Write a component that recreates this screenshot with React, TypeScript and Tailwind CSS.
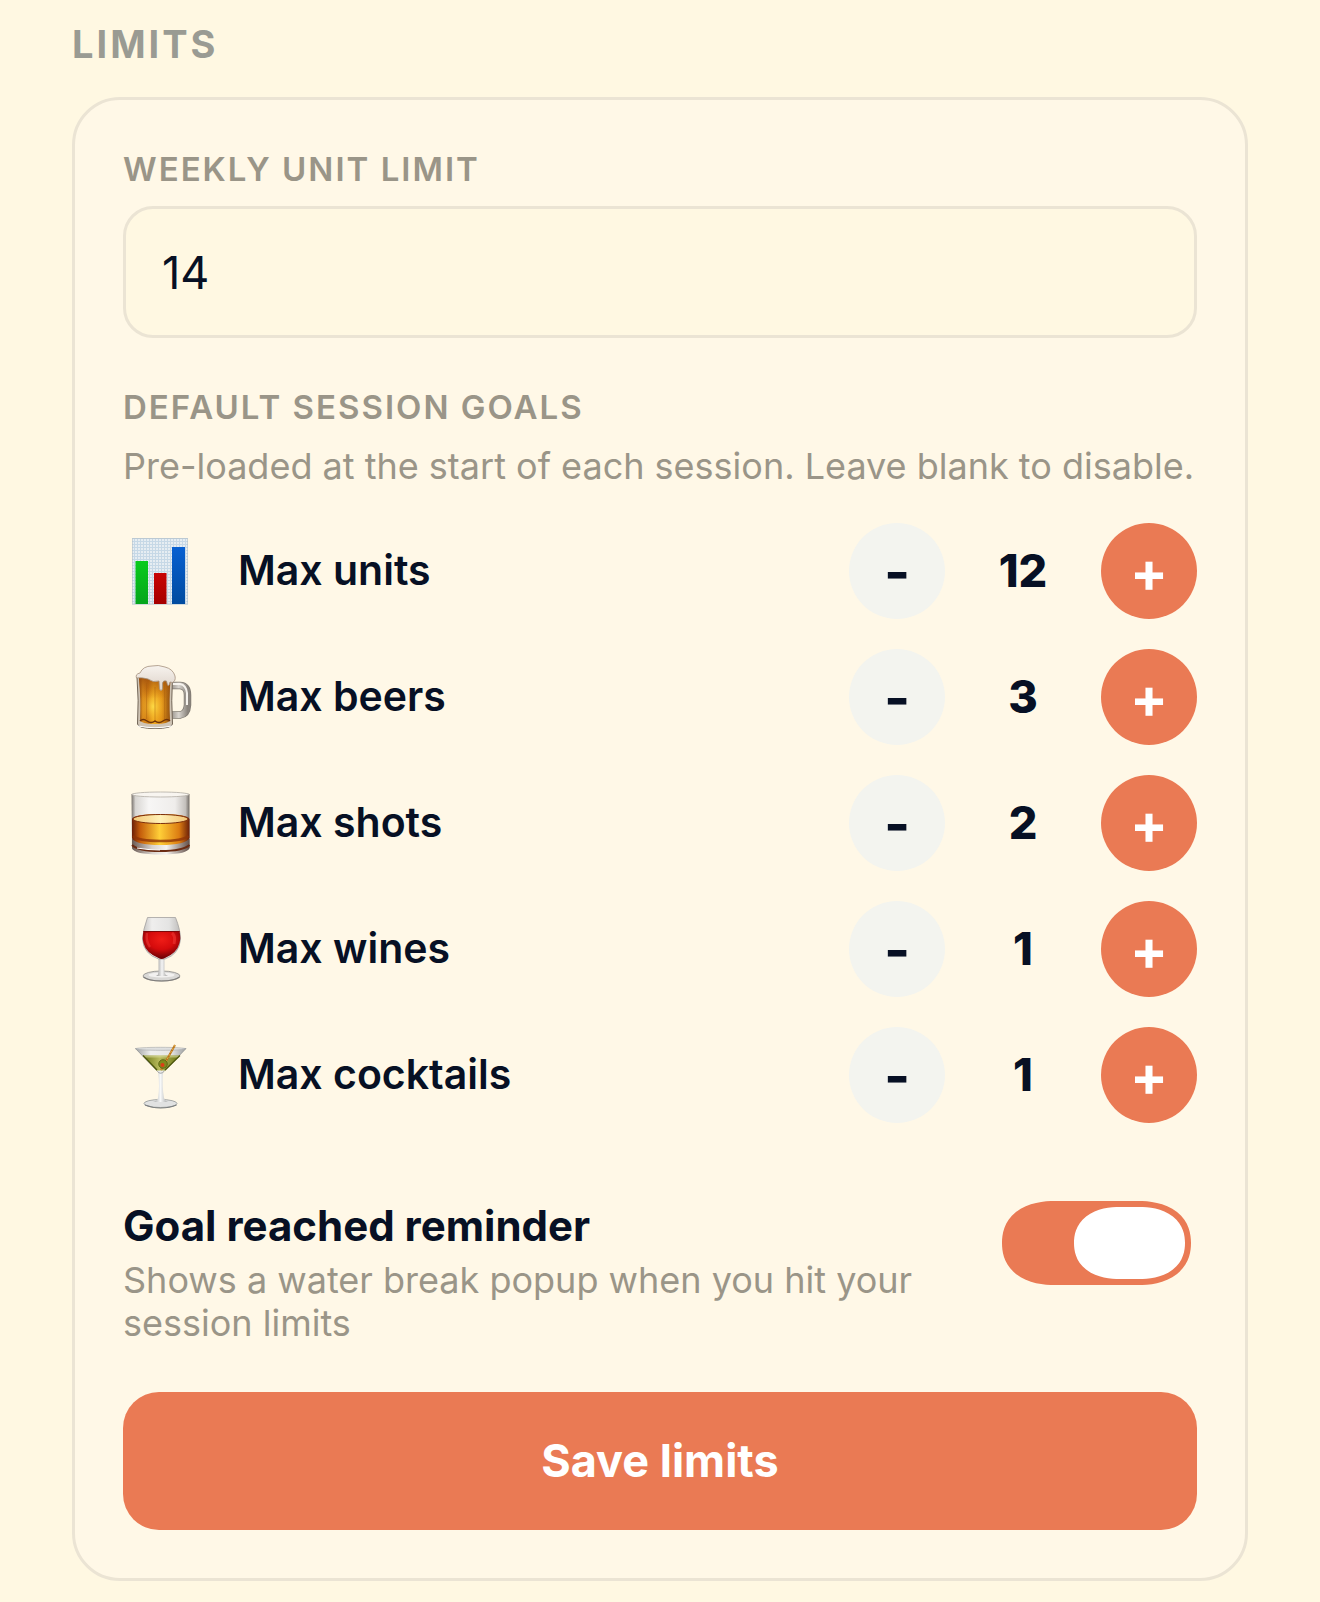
import { useState } from 'react'

const ChartIcon = () => (
  <svg viewBox="0 1 110 100" className="w-[110px] h-[100px]" aria-hidden="true">
    <defs>
      <pattern id="chart-grid" width="3" height="3" patternUnits="userSpaceOnUse">
        <rect width="3" height="3" fill="#e6edf2" />
        <path d="M0 .5H3M.5 0V3" stroke="#c6d8e6" strokeWidth="1" />
      </pattern>
      <linearGradient id="chart-green" x1="0" y1="0" x2="0" y2="1">
        <stop offset="0" stopColor="#08cb1c" />
        <stop offset="1" stopColor="#05a51c" />
      </linearGradient>
      <linearGradient id="chart-red" x1="0" y1="0" x2="0" y2="1">
        <stop offset="0" stopColor="#c80404" />
        <stop offset="1" stopColor="#a60000" />
      </linearGradient>
      <linearGradient id="chart-blue" x1="0" y1="0" x2="0" y2="1">
        <stop offset="0" stopColor="#0760d2" />
        <stop offset="1" stopColor="#004b9f" />
      </linearGradient>
    </defs>
    <rect x="22" y="18" width="56" height="66.500" fill="url(#chart-grid)" />
    <rect x="22.500" y="18.500" width="55" height="65.500" fill="none" stroke="#b4bfc6" strokeOpacity=".6" />
    <rect x="25.500" y="41" width="12.500" height="43" fill="url(#chart-green)" />
    <rect x="44" y="53" width="12.500" height="31" fill="url(#chart-red)" />
    <rect x="62" y="27" width="13" height="57" fill="url(#chart-blue)" />
  </svg>
)

const BeerIcon = () => (
  <svg viewBox="0 2 110 100" className="w-[110px] h-[100px]" aria-hidden="true">
    <defs>
      <linearGradient id="beer-body" x1="0" y1="0" x2="1" y2="0">
        <stop offset="0" stopColor="#8a4a12" />
        <stop offset=".12" stopColor="#d98a1c" />
        <stop offset=".28" stopColor="#c8720f" />
        <stop offset=".45" stopColor="#f0a91f" />
        <stop offset=".72" stopColor="#e08f16" />
        <stop offset="1" stopColor="#92500f" />
      </linearGradient>
      <radialGradient id="beer-glow" cx=".45" cy=".62" r=".45">
        <stop offset="0" stopColor="#ffe04a" stopOpacity=".9" />
        <stop offset="1" stopColor="#f2a51c" stopOpacity="0" />
      </radialGradient>
      <linearGradient id="beer-shade" x1="0" y1="0" x2="0" y2="1">
        <stop offset="0" stopColor="#9a4b0c" stopOpacity=".75" />
        <stop offset=".45" stopColor="#b8650f" stopOpacity="0" />
      </linearGradient>
      <linearGradient id="beer-foam" x1="0" y1="0" x2="0" y2="1">
        <stop offset="0" stopColor="#f7f3ee" />
        <stop offset="1" stopColor="#ddd2c8" />
      </linearGradient>
      <linearGradient id="beer-handle" x1="0" y1="0" x2="1" y2="0">
        <stop offset="0" stopColor="#8f8981" />
        <stop offset=".5" stopColor="#d8d4ce" />
        <stop offset="1" stopColor="#8b857e" />
      </linearGradient>
    </defs>
    <path d="M60 40.500H70Q77.500 41 77.500 50V60Q77 69 70 70H60" fill="none" stroke="#7f7971" strokeWidth="7.500" />
    <path d="M60 40.500H70Q77.500 41 77.500 50V60Q77 69 70 70H60" fill="none" stroke="url(#beer-handle)" strokeWidth="6" />
    <path d="M62 39H70Q76 40 77 48V60" fill="none" stroke="#f6f3ee" strokeWidth="2" />
    <path d="M27 32Q29 56 27.500 79Q28 83.500 45 83.500Q62 83.500 62.500 79Q61 56 62.500 32Z" fill="#cfc4b5" stroke="#716557" strokeWidth="1" />
    <path d="M29 33Q31 56 30 75Q31 79 45 79Q59 79 60 75Q59 56 60.500 33Z" fill="url(#beer-body)" />
    <path d="M29 33Q31 56 30 75Q31 79 45 79Q59 79 60 75Q59 56 60.500 33Z" fill="url(#beer-glow)" />
    <path d="M29 33Q31 56 30 75Q31 79 45 79Q59 79 60 75Q59 56 60.500 33Z" fill="url(#beer-shade)" />
    <path d="M36.500 38V74M45 42V76M54.500 38V74" stroke="#a85c0d" strokeOpacity=".4" strokeWidth="1" />
    <path d="M30 76Q33 73 37 76Q41 79 45 76Q49 79 53 76Q57 73 60 76" fill="none" stroke="#6e3309" strokeWidth="1.500" />
    <path d="M28 81Q45 84.500 62 81" fill="none" stroke="#fff" strokeWidth="1.200" />
    <path d="M26.500 33Q25 29 30 28Q33 21 42 21Q48 19.500 55 22Q63 24 65 31Q66 36 62.500 37.500L60 37Q59 42 57.500 40L56.500 36Q53 35 52.500 38V44Q51 47 49.500 44L49 36Q43 38 38 34Q31 32 26.500 33Z" fill="url(#beer-foam)" stroke="#a4917e" strokeWidth=".8" />
  </svg>
)

const WhiskyIcon = () => (
  <svg viewBox="0 3 110 100" className="w-[110px] h-[100px]" aria-hidden="true">
    <defs>
      <linearGradient id="whisky-glass" x1="0" y1="0" x2="1" y2="0">
        <stop offset="0" stopColor="#77716b" />
        <stop offset=".07" stopColor="#d8d6d3" />
        <stop offset=".3" stopColor="#f7f6f5" />
        <stop offset=".75" stopColor="#efedeb" />
        <stop offset=".93" stopColor="#c4c0bc" />
        <stop offset="1" stopColor="#716b65" />
      </linearGradient>
      <linearGradient id="whisky-body" x1="0" y1="0" x2="1" y2="0">
        <stop offset="0" stopColor="#6b1f08" />
        <stop offset=".14" stopColor="#c45c0b" />
        <stop offset=".48" stopColor="#ffcf38" />
        <stop offset=".82" stopColor="#dc7c12" />
        <stop offset="1" stopColor="#6b1f08" />
      </linearGradient>
      <linearGradient id="whisky-base" x1="0" y1="0" x2="1" y2="0">
        <stop offset="0" stopColor="#6a5951" />
        <stop offset=".35" stopColor="#d9d3ce" />
        <stop offset=".6" stopColor="#f5f2ee" />
        <stop offset="1" stopColor="#635049" />
      </linearGradient>
      <linearGradient id="whisky-top" x1="0" y1="0" x2="1" y2="0">
        <stop offset="0" stopColor="#f3c878" />
        <stop offset=".5" stopColor="#fff1b7" />
        <stop offset="1" stopColor="#f3c474" />
      </linearGradient>
    </defs>
    <path d="M21.500 24Q50 20 79.500 24V78Q77 84.500 50.500 84.500Q24 84.500 22 78Z" fill="url(#whisky-glass)" />
    <ellipse cx="50.500" cy="24.500" rx="28.500" ry="2.500" fill="#f8f5f0" stroke="#b3ada5" strokeWidth=".8" />
    <path d="M22 69V78Q24 84.500 50.500 84.500Q77 84.500 79.500 78V69Z" fill="url(#whisky-base)" />
    <path d="M22 75Q28 81 50.500 81Q73 81 79.500 75" fill="none" stroke="#6b2b12" strokeWidth="2" />
    <path d="M22 49Q24 44 50.500 44Q77 44 79.500 49V68Q76 75 50.500 75Q25 75 22 68Z" fill="url(#whisky-body)" />
    <path d="M23 66Q28 71 50.500 71Q73 71 78.500 66" fill="none" stroke="#8f3508" strokeWidth="2.500" strokeOpacity=".8" />
    <ellipse cx="50.500" cy="49" rx="27.500" ry="4.500" fill="url(#whisky-top)" stroke="#7c2e0b" strokeWidth="1" />
    <path d="M27 78Q38 80 50 80" fill="none" stroke="#fff" strokeWidth="1.200" />
  </svg>
)

const WineIcon = () => (
  <svg viewBox="0 -1 110 100" className="w-[110px] h-[100px]" aria-hidden="true">
    <defs>
      <linearGradient id="wine-glass" x1="0" y1="0" x2="1" y2="0">
        <stop offset="0" stopColor="#c4c2c0" />
        <stop offset=".25" stopColor="#efeeed" />
        <stop offset=".7" stopColor="#e4e4e3" />
        <stop offset="1" stopColor="#bebcba" />
      </linearGradient>
      <radialGradient id="wine-body" cx=".5" cy=".3" r=".65">
        <stop offset="0" stopColor="#f01d17" />
        <stop offset=".55" stopColor="#d50b0c" />
        <stop offset="1" stopColor="#740206" />
      </radialGradient>
      <linearGradient id="wine-stem" x1="0" y1="0" x2="1" y2="0">
        <stop offset="0" stopColor="#8e8d8c" />
        <stop offset=".5" stopColor="#f5f5f5" />
        <stop offset="1" stopColor="#979695" />
      </linearGradient>
    </defs>
    <ellipse cx="51.500" cy="76" rx="18.500" ry="5" fill="#d9d8d6" stroke="#8c8a88" strokeWidth=".8" />
    <path d="M33.500 77Q39 81 51.500 81Q64 81 69.500 77" fill="none" stroke="#7f7d7b" strokeWidth="1.200" />
    <ellipse cx="51.500" cy="75" rx="13" ry="2.500" fill="#f2f1f0" />
    <path d="M48.500 58H54.500L54.500 72Q55 75 58 76H46Q48.500 75 48.500 72Z" fill="url(#wine-stem)" />
    <path d="M37.500 17.500H65.500Q70.500 30 70.500 39Q69.500 54 55 59H48.500Q33.500 54 32.500 39Q33 30 37.500 17.500Z" fill="url(#wine-glass)" stroke="#a3a19f" strokeWidth=".8" />
    <path d="M33.500 31H69.500Q71 38 69.500 43Q67 53 55 58Q51.500 60 48.500 58Q36 53 33.500 43Q32 38 33.500 31Z" fill="url(#wine-body)" />
    <path d="M37 33Q35.500 41 40 47" fill="none" stroke="#ff5a50" strokeWidth="2.500" strokeOpacity=".35" />
    <path d="M62 33Q66 36 64 44" fill="none" stroke="#ff5a50" strokeWidth="3" strokeOpacity=".35" />
    <path d="M33.500 31.500H69.500" stroke="#7d0709" strokeWidth="1" />
  </svg>
)

const CocktailIcon = () => (
  <svg viewBox="0 0 110 100" className="w-[110px] h-[100px]" aria-hidden="true">
    <defs>
      <linearGradient id="cocktail-glass" x1="0" y1="0" x2="1" y2="0">
        <stop offset="0" stopColor="#9fa1a1" />
        <stop offset=".3" stopColor="#eeeeed" />
        <stop offset=".7" stopColor="#e6e6e5" />
        <stop offset="1" stopColor="#9c9e9e" />
      </linearGradient>
      <linearGradient id="cocktail-drink" x1="0" y1="0" x2="1" y2="0">
        <stop offset="0" stopColor="#6c7618" />
        <stop offset=".45" stopColor="#b9bc5e" />
        <stop offset="1" stopColor="#66700f" />
      </linearGradient>
      <linearGradient id="cocktail-stem" x1="0" y1="0" x2="1" y2="0">
        <stop offset="0" stopColor="#a2a4a5" />
        <stop offset=".5" stopColor="#f7f8f8" />
        <stop offset="1" stopColor="#a5a7a8" />
      </linearGradient>
    </defs>
    <ellipse cx="50.500" cy="78.500" rx="16.500" ry="4" fill="#e1e2e2" stroke="#929596" strokeWidth=".8" />
    <path d="M35 80Q42 83 50.500 83Q60 83 66.500 80" fill="none" stroke="#7d8081" strokeWidth="1.200" />
    <path d="M48 46H53Q52 62 54 73Q55 76 58 77H43Q47 76 48 73Q50 62 48 46Z" fill="url(#cocktail-stem)" />
    <path d="M25.500 23.500H76L54 46.500Q50.500 50 47.500 46.500Z" fill="url(#cocktail-glass)" stroke="#8f9293" strokeWidth=".8" />
    <path d="M33 30.500H70L55.500 45.500H46.500Z" fill="url(#cocktail-drink)" />
    <path d="M33 30.500H70L68 32.500H35Z" fill="#d7d89b" fillOpacity=".6" />
    <path d="M33 30.500L47 45M70 30.500L55 45" stroke="#4d560d" strokeWidth="1.200" />
    <ellipse cx="50.500" cy="23.800" rx="25" ry="1.500" fill="#dfe0e0" stroke="#a6a8a9" strokeWidth=".6" />
    <path d="M65 20L51 45" stroke="#b9731a" strokeWidth="2" />
    <path d="M65 20L51 45" stroke="#efbf52" strokeWidth=".8" strokeDasharray="2 1.500" />
    <circle cx="53" cy="39" r="4.300" fill="#7f8a1c" stroke="#545d10" strokeWidth=".8" />
    <circle cx="52.500" cy="40" r="2" fill="#dc3d17" />
  </svg>
)

const initialGoals = [
  { id: 'units', label: 'Max units', value: 12, icon: <ChartIcon /> },
  { id: 'beers', label: 'Max beers', value: 3, icon: <BeerIcon /> },
  { id: 'shots', label: 'Max shots', value: 2, icon: <WhiskyIcon /> },
  { id: 'wines', label: 'Max wines', value: 1, icon: <WineIcon /> },
  { id: 'cocktails', label: 'Max cocktails', value: 1, icon: <CocktailIcon /> },
]

export default function App() {
  const [weeklyLimit, setWeeklyLimit] = useState('14')
  const [goals, setGoals] = useState(initialGoals)
  const [reminder, setReminder] = useState(true)

  const changeGoal = (id: string, delta: number) => {
    setGoals(goals.map(g => (g.id === id ? { ...g, value: Math.max(0, g.value + delta) } : g)))
  }

  return (
    <main className="min-h-screen bg-[#fff8e2] px-[72px] pt-5 pb-5 font-['Inter',sans-serif] text-[#071024]">
      <h1 className="text-[38px] leading-[48px] font-bold tracking-[3px] text-[#9a9b93]">LIMITS</h1>

      <form onSubmit={e => e.preventDefault()}
        className="mt-[29px] rounded-[48px] border-[3px] border-[#ebe4d4] bg-[#fff8e7] p-12">

        {/* Weekly limit */}
        <label htmlFor="weekly-limit" className="block text-[33px] leading-[42px] font-semibold tracking-[2px] text-[#9a9588]">
          WEEKLY UNIT LIMIT
        </label>
        <input
          id="weekly-limit"
          type="text"
          inputMode="numeric"
          value={weeklyLimit}
          onChange={e => setWeeklyLimit(e.target.value)}
          className="mt-4 block h-[132px] w-full rounded-[30px] border-[3px] border-[#ebe4d4] bg-[#fff8e2] px-9 text-[45px] outline-none"
        />

        {/* Session goals */}
        <h2 className="mt-12 text-[33px] leading-[42px] font-semibold tracking-[2px] text-[#9a9588]">DEFAULT SESSION GOALS</h2>
        <p className="mt-[17px] text-[36px] leading-[43px] text-[#9a9588]">
          Pre-loaded at the start of each session. Leave blank to disable.
        </p>

        <ul className="mt-[35px] flex flex-col gap-[30px]">
          {goals.map(goal => (
            <li key={goal.id} className="flex h-24 items-center">
              <span className="-ml-[13px] flex w-32 flex-shrink-0">{goal.icon}</span>
              <span className="flex-1 pb-[2px] text-[41px] leading-[52px] font-semibold">{goal.label}</span>
              <button type="button" aria-label={`Decrease ${goal.label}`} onClick={() => changeGoal(goal.id, -1)}
                className="flex h-24 w-24 items-center justify-center rounded-full bg-[#f3f4ef] pt-[2px] text-[56px] leading-none font-bold">
                -
              </button>
              <span className="w-[156px] text-center text-[45px] leading-[52px] font-extrabold">{goal.value}</span>
              <button type="button" aria-label={`Increase ${goal.label}`} onClick={() => changeGoal(goal.id, 1)}
                className="flex h-24 w-24 items-center justify-center rounded-full bg-[#ea7a54] pt-[2px] text-[56px] leading-none font-bold text-white">
                +
              </button>
            </li>
          ))}
        </ul>

        {/* Reminder */}
        <div className="mt-[78px] flex items-start justify-between pr-[6px]">
          <div className="w-[800px]">
            <label htmlFor="reminder" className="block text-[42px] leading-[50px] font-bold">Goal reached reminder</label>
            <p className="mt-2 text-[36px] leading-[43px] text-[#9a9588]">
              Shows a water break popup when you hit your session limits
            </p>
          </div>
          <span className="relative h-[84px] w-[189px] flex-shrink-0">
            <input id="reminder" type="checkbox" role="switch" checked={reminder} onChange={e => setReminder(e.target.checked)}
              className="peer block h-full w-full cursor-pointer appearance-none rounded-[53px/42px] bg-[#d8d3c6] [corner-shape:superellipse(1.18)] checked:bg-[#ea7a54]" />
            <span className="pointer-events-none absolute top-[6px] left-[6px] h-[72px] w-[111px] rounded-[46px/36px] bg-white [corner-shape:superellipse(1.18)] peer-checked:left-[72px]" />
          </span>
        </div>

        <button type="submit" className="mt-[47px] h-[138px] w-full rounded-[36px] bg-[#ea7a54] text-[45px] font-bold text-white">
          Save limits
        </button>
      </form>
    </main>
  )
}
